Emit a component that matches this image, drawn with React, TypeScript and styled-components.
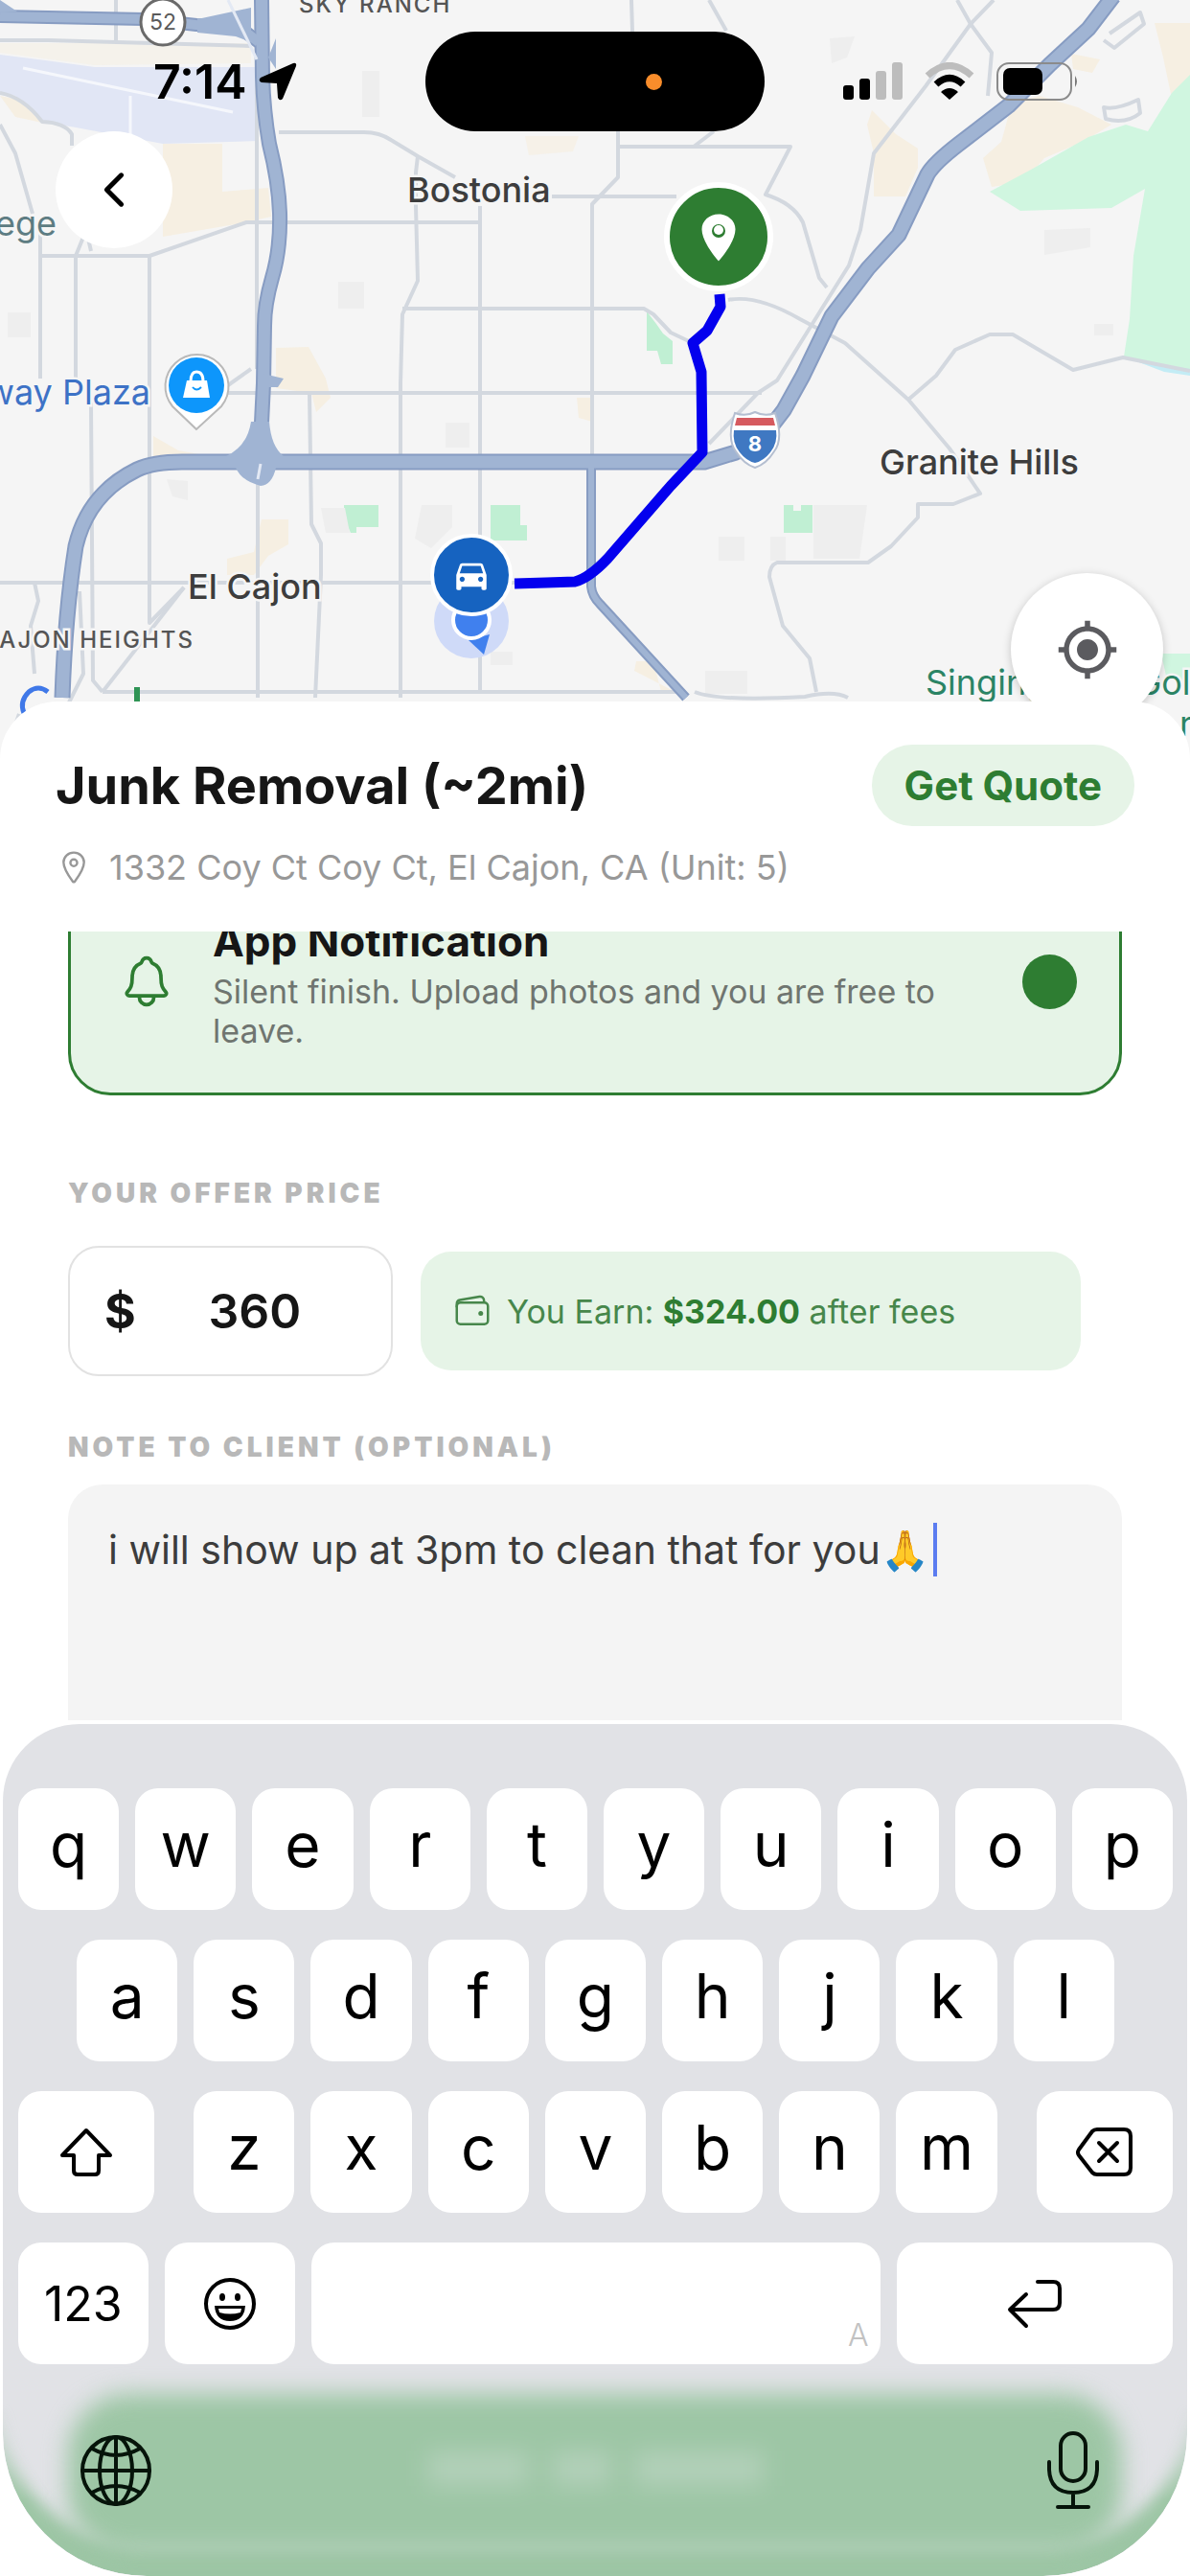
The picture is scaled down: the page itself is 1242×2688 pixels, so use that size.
import React from "react";
import styled, { createGlobalStyle } from "styled-components";
import {
  IoChevronBack,
  IoLocationOutline,
  IoLocationSharp,
  IoNotificationsOutline,
  IoWalletOutline,
} from "react-icons/io5";
import { MdDirectionsCar, MdMyLocation } from "react-icons/md";

const GREEN = "#2e7d32";
const MINT = "#e6f4e7";
const GLASS_GREEN = "#9dc6a5";

const GlobalStyle = createGlobalStyle`
  * { box-sizing: border-box; }
  body {
    margin: 0;
    background: #ffffff;
    font-family: Inter, "Liberation Sans", sans-serif;
    color: #161616;
  }
  button, input, textarea { font: inherit; color: inherit; border: 0; margin: 0; }
  button { cursor: pointer; padding: 0; }
`;

const Screen = styled.main`
  display: flex;
  flex-direction: column;
  min-height: 100vh;
  overflow: hidden;
`;

/* ---------- Map ---------- */

const MapSection = styled.section`
  position: relative;
  height: 792px;
  flex-shrink: 0;
  background: #f5f5f5;
`;

const MapCanvas = styled.svg`
  position: absolute;
  inset: 0;
  width: 100%;
  height: 100%;
`;

const MapOverlay = styled.div`
  position: relative;
`;

const StatusBar = styled.header`
  display: grid;
  grid-template-columns: 1fr auto 1fr;
  align-items: center;
  padding: 33px 116px 0;
`;

const StatusLeft = styled.div`
  display: flex;
  align-items: center;
  gap: 12px;
  padding-left: 44px;
  font-size: 50px;
  line-height: 56px;
  font-weight: 600;
  color: #000;
`;

const StatusRight = styled.div`
  display: flex;
  align-items: center;
  justify-content: flex-end;
  gap: 23px;
`;

const Island = styled.div`
  display: flex;
  align-items: center;
  justify-content: flex-end;
  width: 354px;
  height: 104px;
  padding-right: 107px;
  border-radius: 52px;
  background: #000;
`;

const MicDot = styled.span`
  width: 17px;
  height: 17px;
  border-radius: 50%;
  background: #f98d2b;
`;

const RoundButton = styled.button`
  display: grid;
  place-items: center;
  border-radius: 50%;
  background: #fff;
`;

const BackButton = styled(RoundButton)`
  width: 122px;
  height: 122px;
  margin-left: 58px;
  color: #000;
`;

const LocateButton = styled(RoundButton)`
  position: absolute;
  top: 598px;
  right: 28px;
  width: 159px;
  height: 159px;
  color: #5b5b5f;
  box-shadow: 0 2px 10px rgba(0, 0, 0, 0.2);
`;

/* ---------- Sheet ---------- */

const Sheet = styled.section`
  position: relative;
  display: flex;
  flex: 1;
  flex-direction: column;
  margin-top: -60px;
  border-radius: 60px 60px 0 0;
  background: #fff;
`;

const SheetHeader = styled.div`
  padding: 45px 58px;
`;

const TitleRow = styled.div`
  display: flex;
  align-items: center;
  justify-content: space-between;
`;

const Title = styled.h1`
  margin: 0;
  font-size: 54px;
  line-height: 64px;
  font-weight: 700;
`;

const QuoteButton = styled.button`
  height: 85px;
  padding: 0 34px;
  border-radius: 42px;
  background: ${MINT};
  color: ${GREEN};
  font-size: 42px;
  font-weight: 700;
`;

const Address = styled.p`
  display: flex;
  align-items: center;
  gap: 18px;
  margin: 21px 0 0;
  color: #989898;
  font-size: 36px;
  line-height: 44px;
`;

const ScrollArea = styled.div`
  display: flex;
  flex: 1;
  flex-direction: column;
  overflow: hidden;
  padding: 0 71px 4px;
`;

const OptionCard = styled.label`
  display: flex;
  align-items: center;
  height: 238px;
  flex-shrink: 0;
  gap: 39px;
  margin-top: -67px;
  padding: 0 44px 0 49px;
  border: 3px solid ${GREEN};
  border-radius: 44px;
  background: ${MINT};
  color: ${GREEN};
`;

const OptionText = styled.span`
  display: flex;
  flex: 1;
  flex-direction: column;
`;

const OptionTitle = styled.strong`
  margin: 6px 0 8px;
  color: #161616;
  font-size: 44px;
  line-height: 48px;
  font-weight: 700;
`;

const OptionDetail = styled.span`
  color: #6f7570;
  font-size: 34px;
  line-height: 41px;
`;

const OptionRadio = styled.input`
  appearance: none;
  flex-shrink: 0;
  width: 57px;
  height: 57px;
  border-radius: 50%;
  background: ${GREEN};
`;

const FieldLabel = styled.label<{ $top: number; $bottom: number }>`
  margin: ${(p) => p.$top}px 0 ${(p) => p.$bottom}px;
  color: #b8b8b8;
  font-size: 28px;
  line-height: 34px;
  font-weight: 900;
  letter-spacing: 4px;
`;

const PriceRow = styled.div`
  display: flex;
  align-items: center;
  gap: 29px;
  padding-right: 43px;
`;

const PriceBox = styled.div`
  display: flex;
  align-items: center;
  width: 339px;
  height: 136px;
  padding: 0 36px;
  border: 2px solid #e2e2e2;
  border-radius: 32px;
  font-size: 50px;
  font-weight: 700;
`;

const PriceInput = styled.input`
  width: 100%;
  min-width: 0;
  padding: 0 0 0 18px;
  background: transparent;
  text-align: center;
  font-weight: 600;
  outline: none;
`;

const EarnPill = styled.p`
  display: flex;
  flex: 1;
  align-items: center;
  gap: 16px;
  height: 124px;
  margin: 0;
  padding: 0 34px;
  border-radius: 32px;
  background: ${MINT};
  color: #47874b;
  font-size: 34px;
  line-height: 41px;
  b { color: ${GREEN}; font-weight: 700; }
`;

const NoteWrap = styled.div`
  position: relative;
  display: flex;
  flex: 1;
`;

const NoteInput = styled.textarea`
  flex: 1;
  resize: none;
  padding: 40px 42px;
  border-radius: 36px 36px 0 0;
  background: #f4f4f4;
  color: #3c3c3c;
  font-size: 41px;
  line-height: 56px;
  outline: none;
  overflow: hidden;
`;

const Caret = styled.span`
  position: absolute;
  top: 40px;
  left: 903px;
  width: 4px;
  height: 56px;
  background: #5b7cf0;
`;

/* ---------- Keyboard ---------- */

const Keyboard = styled.section`
  position: relative;
  flex-shrink: 0;
  overflow: hidden;
  margin: 0 3px;
  padding: 67px 15px 0 16px;
  border-radius: 80px 80px 150px 150px;
  background: #e1e2e6;
`;

const KeyRows = styled.div`
  position: relative;
  display: grid;
  gap: 31px;
`;

const KeyRow = styled.div`
  display: grid;
  grid-template-columns: repeat(20, 1fr);
  column-gap: 17px;
`;

const Key = styled.button<{ $span?: number; $start?: number; $small?: boolean }>`
  display: grid;
  place-items: center;
  height: 127px;
  grid-column: ${(p) => p.$start ?? "auto"} / span ${(p) => p.$span ?? 2};
  padding-bottom: ${(p) => (p.$small ? 0 : 10)}px;
  border-radius: 24px;
  background: #fff;
  color: #000;
  font-size: ${(p) => (p.$small ? 50 : 64)}px;
  line-height: 72px;
`;

const ShiftKey = styled(Key)`
  margin-right: 24px;
`;

const DeleteKey = styled(Key)`
  margin-left: 24px;
`;

const KeyPair = styled.div`
  display: grid;
  grid-template-columns: 1fr 1fr;
  grid-column: span 5;
  gap: 17px;
`;

const PairKey = styled(Key)`
  grid-column: auto;
`;

const SpaceKey = styled(Key)`
  place-items: end;
  padding: 0 12px 8px;
  color: #c2c2c2;
  font-size: 32px;
  font-weight: 300;
  line-height: 44px;
`;

const KeyboardFooter = styled.div`
  position: relative;
  display: flex;
  align-items: center;
  justify-content: space-between;
  height: 221px;
  padding: 0 77px 0 64px;
`;

const FooterButton = styled.button`
  display: grid;
  background: transparent;
  color: #06140a;
`;

const GlassRim = styled.div`
  position: absolute;
  inset: auto 0 0;
  height: 200px;
  border-radius: 0 0 150px 150px;
  box-shadow: inset 0 -34px 16px -4px ${GLASS_GREEN};
  mask-image: linear-gradient(transparent 10%, #000 60%);
`;

const GlassButton = styled.div`
  position: absolute;
  right: 68px;
  bottom: 24px;
  left: 68px;
  display: flex;
  justify-content: center;
  gap: 24px;
  height: 166px;
  padding-top: 60px;
  border-radius: 64px;
  background: ${GLASS_GREEN};
  filter: blur(12px);
`;

const GlassWord = styled.span<{ $width: number }>`
  width: ${(p) => p.$width}px;
  height: 36px;
  background: #b2d0b9;
`;

/* ---------- Drawings ---------- */

const minorRoads = [
  "M0 42H50L261 48", "M121 0V42", "M268 45V385",
  "M291 138H380Q396 138 408 146L436 163L475 185",
  "M436 163L434 180V215L436 293L420 328L418 400V728",
  "M501 215V722", "M42 267H156L257 232H501", "M42 240V395", "M79 400V267L90 240L95 262", "M156 267V650L192 613",
  "M420 322H672L682 328L700 347L723 358",
  "M0 130L16 160L34 223", "M0 97Q24 101 44 127Q68 128 75 140V152",
  "M618 480V213L645 185V137", "M576 205H706", "M659 0L660 33", "M740 0L758 32",
  "M647 153H825L799 203Q828 212 838 232L855 290L863 300", "M724 153L745 137",
  "M999 0L1013 25L1035 55L1031 100",
  "M1037 0L1013 25L966 90L912 160L898 240L886 277L859 320L811 397L791 410L740 463",
  "M760 313Q790 307 835 333L882 358L948 417L991 468L1023 515L995 526H958V540L930 570L906 587H811Q803 590 803 602L817 653L845 687L852 722",
  "M948 417L977 392L997 365L1033 349H1057L1120 386L1172 373L1242 387",
  "M238 410H795", "M238 402L262 385", "M95 420L97 710L107 722",
  "M323 410L325 547L335 567V600L329 728", "M269 500V728", "M0 608H537", "M107 722H715",
  "M192 613L107 722", "M36 608L40 627L32 653L36 703", "M83 617L87 703L66 745", "M20 745L4 790",
  "M725 722Q750 732 840 727Q870 720 885 728",
  "M1158 35L1190 13L1194 25L1163 50L1152 42", "M1152 112Q1165 115 1188 104L1190 118Q1175 130 1154 124Z",
];

const CityMap = () => (
  <MapCanvas viewBox="0 0 1242 792" preserveAspectRatio="xMidYMin slice" fontFamily="Inter, sans-serif">
    <rect width="1242" height="792" fill="#f5f5f5" />
    <path fill="#e1e6f5" d="M0 57L40 62L99 70H270V147L170 150L79 133L44 127L16 100L0 97Z" />
    <g stroke="#f5f7fc" strokeWidth="3"><path d="M24 71L243 117" /><path d="M136 100V140" /></g>
    <g fill="#f6efe2">
      <path d="M0 45H262V66L99 68L0 55Z" opacity=".5" />
      <path d="M0 100L20 104L44 128L16 122Z" />
      <path d="M170 150H232V200L280 196L283 226L257 232L170 247Z" />
      <path d="M288 363L322 362L340 395L345 415L330 430L325 410L288 405Z" />
      <path d="M273 542H301V568L280 580L265 600H237V583L265 576Z" />
      <path d="M160 455L186 470L230 478H160Z" />
      <path d="M1056 108L1085 100L1125 112L1160 130L1130 148L1090 165L1068 190L1035 195L1026 165L1045 148Z" />
      <path d="M1205 24H1242V80L1222 98L1214 60Z" />
      <path d="M910 115L935 140L958 155V175L945 205H912V160L905 130Z" />
      <path d="M1118 56L1148 62L1140 76L1120 72Z" />
      <path d="M602 415H618V440L604 436Z" /><path d="M664 690H682L690 722H705L662 700Z" />
      <path d="M548 142H604L598 158L552 162Z" opacity=".7" />
    </g>
    <path fill="#d0f6e0" d="M1242 78L1223 97L1198 137L1175 130L1136 143L1076 177L1033 200L1065 220L1160 217L1195 197L1183 267L1179 333L1173 372L1242 387Z" />
    <path fill="#c3ecf5" d="M1186 377L1242 385V392L1215 388Z" />
    <path fill="#d0f6e0" d="M1212 682L1242 682V710H1218Z" />
    <path fill="#c0efd3" d="M359 527H395V550H372V556H366L359 540ZM512 527H543V548H550V564H512ZM818 527H828V533H836V527H848V556H818ZM675 325L685 338L692 348L702 356V380H690L686 366H675Z" />
    <g fill="#eeeeee">
      <path d="M353 294H380V322H353ZM8 326H32V352H8ZM465 441H490V467H465ZM174 500L196 502V522L180 518ZM335 530H360L365 556H340ZM440 527H472V550L450 572L433 562ZM849 527H905L897 583H849ZM750 560H777V585H750ZM804 560H820V585H804ZM736 700H780V724H736ZM378 74H396V122H378ZM1090 240L1138 238V258L1090 266ZM1142 338H1162V350H1142ZM866 40L892 38L884 60L868 66ZM512 680H535V694H512Z" />
    </g>

    <g fill="none" stroke="#d3d8df" strokeWidth="4" strokeLinejoin="round">
      {minorRoads.map((d) => <path key={d} d={d} />)}
    </g>

    {[["#879cc2", 0], ["#a0b4d3", 4]].map(([color, inset]) => (
      <g key={color} fill="none" stroke={color as string} strokeLinejoin="round">
        <path strokeWidth={10 - (inset as number)} d="M617 482V612Q618 622 626 630L716 728" />
        <path strokeWidth={14 - (inset as number)} d="M0 17L150 20L205 26L248 27L270 44" />
        <path strokeWidth={16 - (inset as number)} d="M273 0L274 80Q275 115 281 150Q291 190 292 222Q293 260 284 290Q276 318 276 340L275 400L271 482" />
        <path strokeWidth={17 - (inset as number)} d="M65 728Q68 640 79 570Q92 515 143 490Q160 482 190 482H735L768 472L795 458L818 428L838 392L868 330L906 280L938 245L968 182Q975 170 1001 150L1053 110L1096 67L1136 30L1162 -4" />
      </g>
    ))}
    <g fill="#a0b4d3">
      <path d="M262 440H281Q283 466 296 476H236Q258 466 262 440Z" />
      <path d="M246 488H288Q284 506 272 507Q252 502 246 488Z" />
      <path d="M275 390L296 395L290 404H275ZM288 40V72L280 60ZM206 20L262 8V44L246 38L206 34ZM0 0L18 12H0Z" />
    </g>
    <g stroke="#e3e9f4" strokeWidth="3" fill="none"><path d="M238 0L268 62" /><path d="M269 500L272 484" /></g>

    <path fill="none" stroke="#0400ee" strokeWidth="11" strokeLinejoin="round" d="M751 307L752 320L738 345L723 358L732 388L733 472L700 507L634 583Q615 603 600 607L570 608L537 609" />

    <g>
      <ellipse cx="170" cy="23" rx="23" ry="24" fill="#fff" stroke="#6a6a6a" strokeWidth="3" />
      <text x="170" y="31" textAnchor="middle" fontSize="23" fill="#5a5a5a">52</text>
    </g>
    <g>
      <path d="M767 431Q778 435 788 430Q798 435 809 431Q818 458 808 471Q800 484 788 488Q776 484 768 471Q758 458 767 431Z" fill="#fff" stroke="#b4bed0" strokeWidth="2" />
      <path d="M769 436H807L809 444H767Z" fill="#d65a5f" />
      <path d="M766 449H810Q812 462 804 472Q797 481 788 483Q779 481 772 472Q764 462 766 449Z" fill="#3f78c2" />
      <text x="788" y="471" textAnchor="middle" fontSize="22" fontWeight="700" fill="#fff">8</text>
    </g>

    <g>
      <path d="M205 448L180 424A33 33 0 1 1 231 424Z" fill="#fff" stroke="#b9b9b9" strokeWidth="2" />
      <circle cx="205" cy="402" r="29" fill="#0d96fb" />
      <path d="M195 397H216L219 415H191Z" fill="#fff" />
      <path d="M199 398Q199 388 205 388Q212 388 212 398" fill="none" stroke="#fff" strokeWidth="3" />
      <path d="M201 404Q205 409 210 404" fill="none" stroke="#0d96fb" strokeWidth="2" />
    </g>

    <circle cx="492" cy="648" r="39" fill="#cfdaf8" />
    <path d="M489 668L511 662L505 683Z" fill="#4080ee" />
    <circle cx="492" cy="647" r="19" fill="#4080ee" stroke="#fff" strokeWidth="4" />
    <circle cx="492" cy="600" r="41" fill="#1663c0" stroke="#fff" strokeWidth="4" />
    <MdDirectionsCar x="471" y="579" size={42} color="#fff" />

    <circle cx="750" cy="247" r="54" fill={GREEN} stroke="#fff" strokeWidth="6" />
    <IoLocationSharp x="722" y="220" size={56} color="#fff" />
    <circle cx="750" cy="240" r="5" fill="#fff" />

    <g stroke="#f5f5f5" strokeWidth="5" paintOrder="stroke" fill="#3d3d3d" fontSize="36" fontWeight="500">
      <text x="425" y="211">Bostonia</text>
      <text x="196" y="625">El Cajon</text>
      <text x="918" y="495">Granite Hills</text>
      <g fontWeight="400">
        <text x="59" y="246" textAnchor="end" fill="#5d7c82">ege</text>
        <text x="157" y="422" textAnchor="end" fill="#3d72c6">way Plaza</text>
        <text x="966" y="725" fill="#2b8465">Singing Hills Golf</text>
        <text x="1231" y="768" fill="#2b8465">r</text>
      </g>
      <g fontSize="24" letterSpacing="2" fill="#555">
        <text x="312" y="13">SKY RANCH</text>
        <text x="203" y="676" textAnchor="end">AJON HEIGHTS</text>
      </g>
    </g>
    <path d="M50 722Q40 714 30 722Q20 732 25 744" fill="none" stroke="#3f78e8" strokeWidth="5" />
    <path d="M143 717V740" stroke="#2f9455" strokeWidth="6" />
  </MapCanvas>
);

const LocationArrow = () => (
  <svg width="40" height="40" viewBox="0 0 40 40" fill="#000">
    <path d="M36 1Q40 0 39 4L25 38Q22 41 20 37L19 22L3 21Q-1 19 2 16Z" />
  </svg>
);

const SignalBars = () => (
  <svg width="62" height="40" viewBox="0 0 62 40">
    <rect y="24" width="11" height="15" rx="3" />
    <rect x="17" y="17" width="11" height="22" rx="3" />
    <g fill="#bdbdbd"><rect x="34" y="9" width="11" height="30" rx="3" /><rect x="51" width="11" height="39" rx="3" /></g>
  </svg>
);

const Wifi = () => (
  <svg width="52" height="40" viewBox="0 0 52 40" fill="none" strokeWidth="7">
    <path d="M3 14Q26 -7 49 14" stroke="#bdbdbd" />
    <path d="M12 23Q26 10 40 23" stroke="#000" />
    <path d="M26 39L17 31Q26 23 35 31Z" fill="#000" />
  </svg>
);

const Battery = () => (
  <svg width="86" height="40" viewBox="0 0 86 40">
    <rect x="1" y="1" width="77" height="38" rx="12" fill="none" stroke="#8b8b8b" strokeWidth="2" />
    <rect x="7" y="6" width="41" height="28" rx="7" />
    <path d="M82 14Q86 20 82 26Z" fill="#777" />
  </svg>
);

const stroke = { fill: "none", stroke: "currentColor", strokeLinecap: "round", strokeLinejoin: "round" } as const;

const ShiftIcon = () => (
  <svg width="56" height="52" viewBox="0 0 56 52" {...stroke} strokeWidth="4">
    <path d="M28 3L53 29H41V45Q41 49 37 49H19Q15 49 15 45V29H3Z" />
  </svg>
);

const DeleteIcon = () => (
  <svg width="60" height="52" viewBox="0 0 60 52" {...stroke} strokeWidth="4">
    <path d="M22 2H50Q57 2 57 9V42Q57 49 50 49H22Q19 49 17 47L3 29Q1 26 3 23L17 4Q19 2 22 2Z" />
    <path d="M24 16L43 35M43 16L24 35" />
  </svg>
);

const SmileIcon = () => (
  <svg width="56" height="56" viewBox="0 0 56 56">
    <circle cx="28" cy="28" r="25" fill="none" stroke="#000" strokeWidth="4" />
    <ellipse cx="20" cy="21" rx="3" ry="4" /><ellipse cx="36" cy="21" rx="3" ry="4" />
    <path d="M12 30H44Q43 46 28 46Q13 46 12 30Z" />
    <path d="M16 33H40L39 37Q28 40 17 37Z" fill="#fff" />
  </svg>
);

const ReturnIcon = () => (
  <svg width="58" height="52" viewBox="0 0 58 52" {...stroke} strokeWidth="4">
    <path d="M32 3H48Q55 3 55 10V25Q55 32 48 32H4M20 16L3 32L20 49" />
  </svg>
);

const GlobeIcon = () => (
  <svg width="76" height="76" viewBox="0 0 76 76" {...stroke} strokeWidth="4">
    <circle cx="38" cy="38" r="35" />
    <ellipse cx="38" cy="38" rx="17" ry="35" />
    <path d="M38 3V73M3 38H73M13 15Q38 29 63 15M13 61Q38 47 63 61" />
  </svg>
);

const MicIcon = () => (
  <svg width="54" height="82" viewBox="0 0 54 82" {...stroke} strokeWidth="4">
    <rect x="14" y="2" width="26" height="50" rx="13" />
    <path d="M2 32V40Q3 64 27 64Q51 64 52 40V32M27 64V79M11 79H43" />
  </svg>
);

const letterRows = ["qwertyuiop", "asdfghjkl", "zxcvbnm"];

const letters = (row: string, start?: number) =>
  [...row].map((c, i) => <Key key={c} type="button" $start={i === 0 ? start : undefined}>{c}</Key>);

export default function App() {
  return (
    <>
      <GlobalStyle />
      <Screen>
        <MapSection>
          <CityMap />
          <MapOverlay>
            <StatusBar>
              <StatusLeft>7:14<LocationArrow /></StatusLeft>
              <Island><MicDot /></Island>
              <StatusRight><SignalBars /><Wifi /><Battery /></StatusRight>
            </StatusBar>
            <BackButton type="button" aria-label="Back"><IoChevronBack size={54} /></BackButton>
          </MapOverlay>
          <LocateButton type="button" aria-label="My location"><MdMyLocation size={66} /></LocateButton>
        </MapSection>

        <Sheet>
          <SheetHeader>
            <TitleRow>
              <Title>Junk Removal (~2mi)</Title>
              <QuoteButton type="button">Get Quote</QuoteButton>
            </TitleRow>
            <Address><IoLocationOutline size={38} />1332 Coy Ct Coy Ct, El Cajon, CA (Unit: 5)</Address>
          </SheetHeader>

          <ScrollArea>
            <OptionCard>
              <IoNotificationsOutline size={60} />
              <OptionText>
                <OptionTitle>App Notification</OptionTitle>
                <OptionDetail>Silent finish. Upload photos and you are free to leave.</OptionDetail>
              </OptionText>
              <OptionRadio type="radio" name="finish" defaultChecked />
            </OptionCard>

            <FieldLabel htmlFor="price" $top={85} $bottom={38}>YOUR OFFER PRICE</FieldLabel>
            <PriceRow>
              <PriceBox>$<PriceInput id="price" inputMode="numeric" defaultValue="360" /></PriceBox>
              <EarnPill>
                <IoWalletOutline size={40} />
                <span>You Earn: <b>$324.00</b> after fees</span>
              </EarnPill>
            </PriceRow>

            <FieldLabel htmlFor="note" $top={57} $bottom={22}>NOTE TO CLIENT (OPTIONAL)</FieldLabel>
            <NoteWrap>
              <NoteInput id="note" defaultValue="i will show up at 3pm to clean that for you🙏" />
              <Caret />
            </NoteWrap>
          </ScrollArea>
        </Sheet>

        <Keyboard aria-label="Keyboard">
          <GlassRim />
          <GlassButton>
            <GlassWord $width={106} /><GlassWord $width={62} /><GlassWord $width={135} />
          </GlassButton>
          <KeyRows>
            <KeyRow>{letters(letterRows[0])}</KeyRow>
            <KeyRow>{letters(letterRows[1], 2)}</KeyRow>
            <KeyRow>
              <ShiftKey type="button" $span={3} $small aria-label="Shift"><ShiftIcon /></ShiftKey>
              {letters(letterRows[2])}
              <DeleteKey type="button" $span={3} $small aria-label="Delete"><DeleteIcon /></DeleteKey>
            </KeyRow>
            <KeyRow>
              <KeyPair>
                <PairKey type="button" $small>123</PairKey>
                <PairKey type="button" $small aria-label="Emoji"><SmileIcon /></PairKey>
              </KeyPair>
              <SpaceKey type="button" $span={10} aria-label="Space">A</SpaceKey>
              <Key type="button" $span={5} $small aria-label="Return"><ReturnIcon /></Key>
            </KeyRow>
          </KeyRows>
          <KeyboardFooter>
            <FooterButton type="button" aria-label="Next keyboard"><GlobeIcon /></FooterButton>
            <FooterButton type="button" aria-label="Dictate"><MicIcon /></FooterButton>
          </KeyboardFooter>
        </Keyboard>
      </Screen>
    </>
  );
}
